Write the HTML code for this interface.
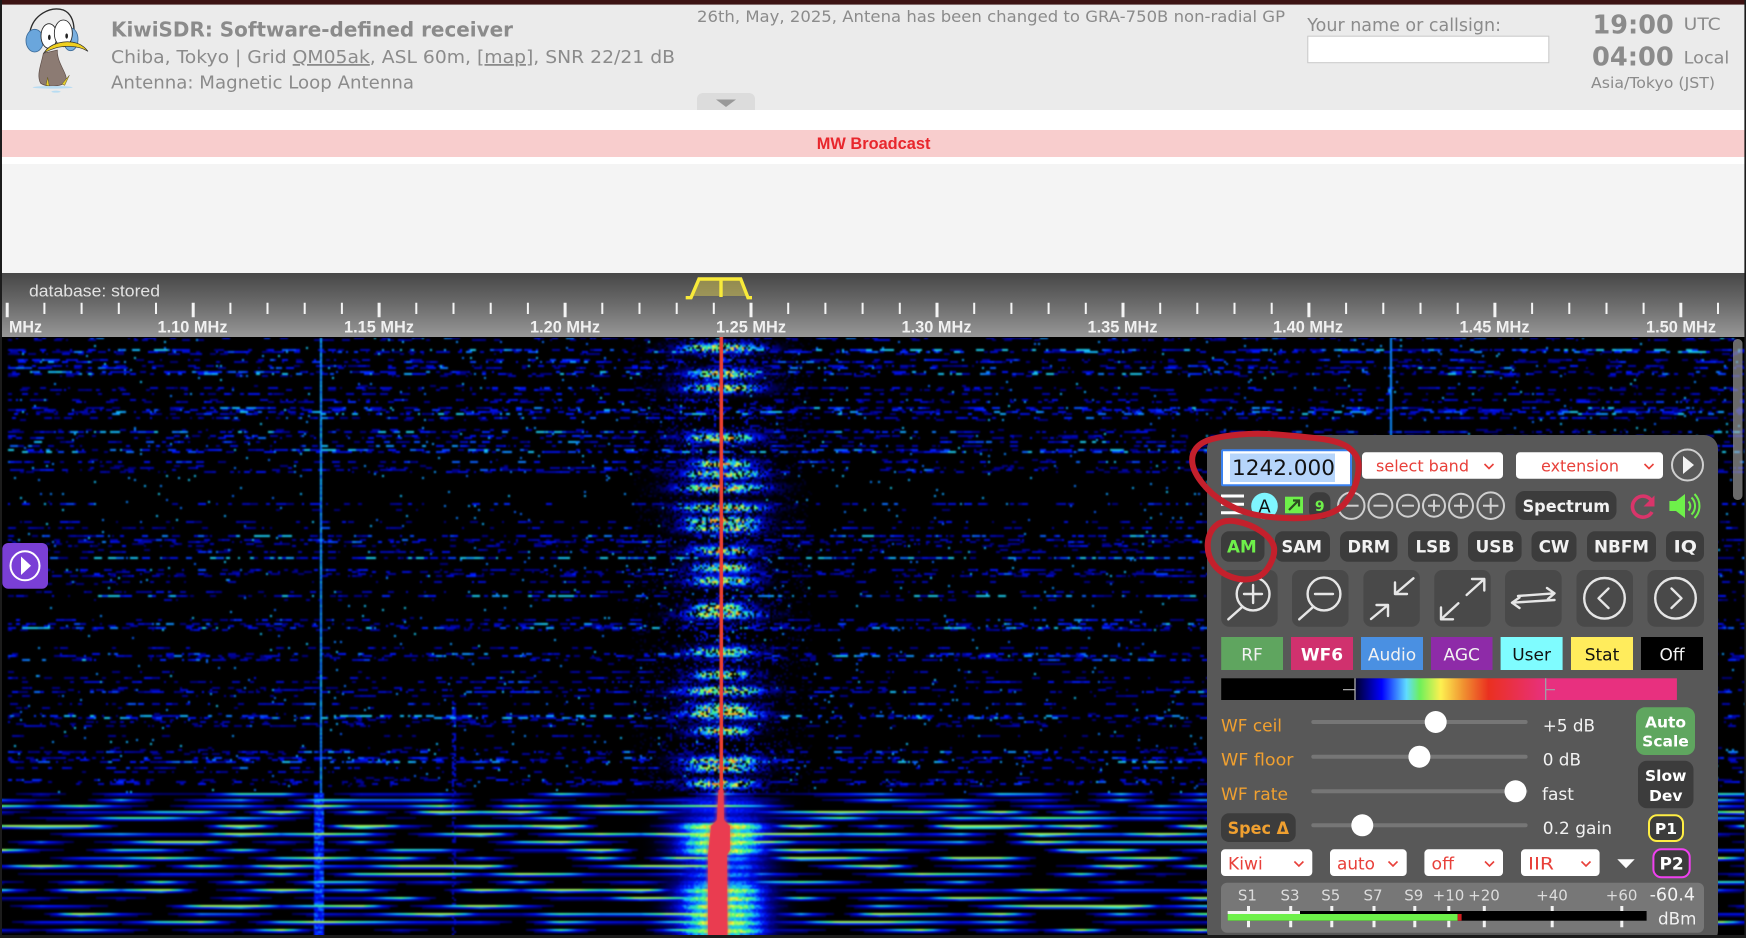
<!DOCTYPE html>
<html><head><meta charset="utf-8"><title>KiwiSDR</title>
<style>
html,body{margin:0;padding:0;background:#000;width:1746px;height:938px;overflow:hidden}
#wf{position:absolute;left:0;top:337px;width:1746px;height:598px;display:block}
#ui{position:absolute;left:0;top:0}
text{font-family:"DejaVu Sans",sans-serif}
.l{font-family:"Liberation Sans",Arial,sans-serif}
.b{font-weight:bold}
.g{fill:#8b8b8b}
.w{fill:#f2f2f2}
.r{fill:#e8403a}
.o{fill:#f0a030}
.ch{fill:none;stroke:#e8403a;stroke-width:1.6}
.ic{fill:none;stroke:#e6e6e6;stroke-width:2.4;stroke-linecap:round;stroke-linejoin:round}
.cc{fill:none;stroke:#cfcfcf;stroke-width:2}
.btn{fill:#3c3c3c}
.ib{fill:#494949}
.tr{fill:#767676}
.th{fill:#fff}
.sc{fill:#f0f0f0;font-size:16.5px;font-weight:bold}
.sm{fill:#dcdcdc;font-size:15px}
</style></head>
<body>
<canvas id="wf" width="1746" height="598"></canvas>
<svg id="ui" width="1746" height="938" viewBox="0 0 1746 938" xmlns="http://www.w3.org/2000/svg">
<defs>
<linearGradient id="sg" x1="0" y1="0" x2="0" y2="1"><stop offset="0" stop-color="#474747"/><stop offset=".5" stop-color="#6c6c6c"/><stop offset="1" stop-color="#979797"/></linearGradient>
<linearGradient id="cb" x1="0" y1="0" x2="1" y2="0">
<stop offset="0" stop-color="#00002a"/><stop offset=".14" stop-color="#0000ff"/><stop offset=".27" stop-color="#5fdcff"/><stop offset=".34" stop-color="#6ef05a"/><stop offset=".45" stop-color="#fdf050"/><stop offset=".57" stop-color="#f09030"/><stop offset=".7" stop-color="#ea3020"/><stop offset="1" stop-color="#e8307f"/></linearGradient>
</defs>
<!-- page areas -->
<rect x="0" y="0" width="1746" height="110" fill="#ebebeb"/>
<rect x="0" y="0" width="1746" height="4.6" fill="#3d1414"/>
<rect x="0" y="110" width="1746" height="20" fill="#fff"/>
<rect x="0" y="130" width="1746" height="27" fill="#f8cdcd"/>
<rect x="0" y="157" width="1746" height="7" fill="#fff"/>
<rect x="0" y="164" width="1746" height="109" fill="#f4f4f4"/>
<rect x="0" y="273" width="1746" height="64" fill="url(#sg)"/>
<rect x="0" y="0" width="2" height="938" fill="#1c1c1c"/>
<rect x="1744.4" y="0" width="1.6" height="938" fill="#1c1c1c"/>

<!-- kiwi logo -->
<g transform="scale(.3333)">
<path d="M90 95C100 45 150 18 190 30C210 38 222 60 222 90" fill="none" stroke="#2b2b2b" stroke-width="4"/>
<ellipse cx="104" cy="122" rx="26" ry="34" fill="#6aa6dc" stroke="#3a6a98" stroke-width="2.5"/>
<ellipse cx="212" cy="118" rx="22" ry="34" fill="#7ab0e0" stroke="#3a6a98" stroke-width="2.5"/>
<path d="M130 160C125 190 108 225 122 250C140 262 185 262 198 244C205 222 170 190 172 150Z" fill="#8c7b73" stroke="#5a4a44" stroke-width="2"/>
<ellipse cx="147" cy="108" rx="24" ry="37" fill="#fff" stroke="#222" stroke-width="2.5"/>
<ellipse cx="190" cy="100" rx="27" ry="40" fill="#fff" stroke="#222" stroke-width="2.5"/>
<ellipse cx="148" cy="112" rx="4" ry="8" fill="#222"/><ellipse cx="200" cy="108" rx="4" ry="8" fill="#222"/>
<path d="M132 158C150 130 195 118 232 130C248 136 258 146 264 154C240 138 190 132 150 150Z" fill="#f0d020" stroke="#2b2b2b" stroke-width="2"/>
<path d="M143 232L148 258L138 256ZM208 226L194 256L186 252Z" fill="#e8d030" stroke="#5a5020" stroke-width="1.5"/>
<ellipse cx="158" cy="262" rx="60" ry="4" fill="#b8dcf2"/><ellipse cx="168" cy="275" rx="14" ry="3" fill="#b8dcf2"/>
</g>

<!-- header text -->
<text x="111" y="36.5" class="b g" font-size="20" textLength="402" lengthAdjust="spacingAndGlyphs">KiwiSDR: Software-defined receiver</text>
<text x="111" y="63" class="g" font-size="18" textLength="564" lengthAdjust="spacingAndGlyphs">Chiba, Tokyo | Grid <tspan text-decoration="underline">QM05ak</tspan>, ASL 60m, <tspan text-decoration="underline">[map]</tspan>, SNR 22/21 dB</text>
<text x="111" y="88.5" class="g" font-size="18" textLength="303" lengthAdjust="spacingAndGlyphs">Antenna: Magnetic Loop Antenna</text>
<text x="697" y="22" class="g" font-size="16" textLength="588" lengthAdjust="spacingAndGlyphs">26th, May, 2025, Antena has been changed to GRA-750B non-radial GP</text>
<path d="M697 110V99a6 6 0 0 1 6-6h46a6 6 0 0 1 6 6v11Z" fill="#dcdcdc"/>
<path d="M716 99.5h20l-10 7.5Z" fill="#999"/>
<text x="1307.3" y="31" class="g" font-size="18" textLength="193.7" lengthAdjust="spacingAndGlyphs">Your name or callsign:</text>
<rect x="1307.8" y="36.2" width="241" height="26.5" fill="#fff" stroke="#c8c8c8"/>
<text x="1592.5" y="33.3" class="b g" font-size="26" textLength="81.2" lengthAdjust="spacingAndGlyphs">19:00</text>
<text x="1683.7" y="30" class="g" font-size="17" textLength="37" lengthAdjust="spacingAndGlyphs">UTC</text>
<text x="1592" y="65.7" class="b g" font-size="26" textLength="81.7" lengthAdjust="spacingAndGlyphs">04:00</text>
<text x="1683.7" y="63.3" class="g" font-size="17" textLength="45.6" lengthAdjust="spacingAndGlyphs">Local</text>
<text x="1591" y="88" class="g" font-size="15" textLength="124" lengthAdjust="spacingAndGlyphs">Asia/Tokyo (JST)</text>
<text x="816.8" y="149" class="l b" font-size="16.5" fill="#e8262c" textLength="113.6" lengthAdjust="spacingAndGlyphs">MW Broadcast</text>

<!-- scale -->
<text x="29" y="296.7" class="l" font-size="17" fill="#e2e2e2" textLength="131" lengthAdjust="spacingAndGlyphs">database: stored</text>
<path id="ticksMinor" fill="none" stroke="#f4f4f4" stroke-width="2"/>
<path id="ticksMajor" fill="none" stroke="#f4f4f4" stroke-width="3"/>
<g class="l" text-anchor="middle">
<text x="25.5" y="332.7" class="l sc" textLength="33" lengthAdjust="spacingAndGlyphs">MHz</text>
<text x="192.5" y="332.7" class="l sc" textLength="70" lengthAdjust="spacingAndGlyphs">1.10 MHz</text>
<text x="379" y="332.7" class="l sc" textLength="70" lengthAdjust="spacingAndGlyphs">1.15 MHz</text>
<text x="565" y="332.7" class="l sc" textLength="70" lengthAdjust="spacingAndGlyphs">1.20 MHz</text>
<text x="751" y="332.7" class="l sc" textLength="70" lengthAdjust="spacingAndGlyphs">1.25 MHz</text>
<text x="936.5" y="332.7" class="l sc" textLength="70" lengthAdjust="spacingAndGlyphs">1.30 MHz</text>
<text x="1122.5" y="332.7" class="l sc" textLength="70" lengthAdjust="spacingAndGlyphs">1.35 MHz</text>
<text x="1308" y="332.7" class="l sc" textLength="70" lengthAdjust="spacingAndGlyphs">1.40 MHz</text>
<text x="1494.5" y="332.7" class="l sc" textLength="70" lengthAdjust="spacingAndGlyphs">1.45 MHz</text>
<text x="1681" y="332.7" class="l sc" textLength="70" lengthAdjust="spacingAndGlyphs">1.50 MHz</text>
</g>
<!-- passband -->
<path d="M699 279H740.7L746.7 296H693Z" fill="#d8c850" fill-opacity=".5"/>
<path d="M685.7 297.7H691L699 279H740.7L748 297.7H752M721 279V297" fill="none" stroke="#f8ea3a" stroke-width="3.4"/>

<!-- left purple button -->
<rect x="2.3" y="543" width="45.7" height="45.7" rx="6" fill="#7a3fd6"/>
<circle cx="25" cy="565.8" r="14.5" fill="none" stroke="#fff" stroke-width="2"/>
<path d="M21 556.5L31 565.8L21 575Z" fill="#fff"/>

<!-- scrollbar -->
<rect x="1733" y="339" width="9.5" height="161" rx="4.5" fill="#b0b0b0" fill-opacity=".6"/>

<!-- control panel -->
<rect x="1207" y="435" width="511" height="510" rx="14" fill="#585858"/>
<!-- freq input -->
<rect x="1222" y="450.3" width="129" height="35" rx="1" fill="#fff" stroke="#3b82f0" stroke-width="2"/>
<rect x="1230" y="453.5" width="105" height="28.5" fill="#b6d5fb"/>
<text x="1232" y="475" font-size="21.6" fill="#111" textLength="103" lengthAdjust="spacingAndGlyphs">1242.000</text>
<!-- selects -->
<rect x="1362" y="452.3" width="141" height="26.4" rx="4" fill="#fff"/>
<text x="1376" y="471.7" class="r" font-size="16" textLength="93" lengthAdjust="spacingAndGlyphs">select band</text>
<path class="ch" d="M1484.5 464l4.5 4.5 4.5-4.5"/>
<rect x="1516" y="452.3" width="147" height="26.4" rx="4" fill="#fff"/>
<text x="1541" y="471.7" class="r" font-size="16" textLength="78" lengthAdjust="spacingAndGlyphs">extension</text>
<path class="ch" d="M1644.5 464l4.5 4.5 4.5-4.5"/>
<circle cx="1687.5" cy="465" r="15.5" class="cc" stroke-width="2.2"/>
<path d="M1683 456L1694 465L1683 474Z" fill="#f2f2f2"/>
<!-- row 2 -->
<path d="M1221 496H1244M1221 504.3H1244M1221 512.7H1244" stroke="#fff" stroke-width="3"/>
<circle cx="1264.5" cy="506" r="13.3" fill="#7ff6ff"/>
<text x="1264.5" y="512.5" font-size="18" text-anchor="middle" fill="#111">A</text>
<rect x="1285" y="496.7" width="18" height="16.6" fill="#6ef04a"/>
<path d="M1289 510L1298 501M1293 500.5H1299V506.5" fill="none" stroke="#2d4a20" stroke-width="2.2"/>
<rect x="1309" y="492.3" width="21.4" height="26.7" rx="8" class="btn"/>
<text x="1319.7" y="511" class="b" font-size="14" text-anchor="middle" fill="#6ef04a">9</text>
<g class="cc">
<circle cx="1351.3" cy="505.7" r="13.2"/><path d="M1344 505.7H1358.6"/>
<circle cx="1380.4" cy="505.7" r="12"/><path d="M1373.5 505.7H1387.3"/>
<circle cx="1408" cy="505.7" r="11"/><path d="M1402 505.7H1414"/>
<circle cx="1434" cy="505.7" r="11"/><path d="M1428 505.7H1440M1434 499.7V511.7"/>
<circle cx="1461" cy="505.7" r="12"/><path d="M1454 505.7H1468M1461 498.7V512.7"/>
<circle cx="1490.7" cy="505.7" r="13.3"/><path d="M1483 505.7H1498.4M1490.7 498V513.4"/>
</g>
<rect x="1515.5" y="491" width="101" height="29" rx="9" class="btn"/>
<text x="1522.6" y="512" class="b w" font-size="16.5" textLength="87.4" lengthAdjust="spacingAndGlyphs">Spectrum</text>
<path d="M1651.5 500.5A10.5 10.5 0 1 0 1652 512" fill="none" stroke="#d9356a" stroke-width="3.6"/>
<path d="M1654.5 495.5V506.5H1643.5Z" fill="#d9356a"/>
<path d="M1669.4 501H1676L1685 494V518L1676 511H1669.4Z" fill="#6ef04a"/>
<path d="M1688.5 501.5A6.5 6.5 0 0 1 1688.5 510.5M1691.5 497.5A12 12 0 0 1 1691.5 514.5M1694.5 494A17 17 0 0 1 1694.5 518" fill="none" stroke="#6ef04a" stroke-width="2"/>

<!-- mode buttons -->
<g class="btn">
<rect x="1221" y="531.3" width="43.5" height="30.4" rx="8"/>
<rect x="1275" y="531.3" width="55" height="30.4" rx="8"/>
<rect x="1340" y="531.3" width="57.4" height="30.4" rx="8"/>
<rect x="1408" y="531.3" width="49.7" height="30.4" rx="8"/>
<rect x="1468" y="531.3" width="53.6" height="30.4" rx="8"/>
<rect x="1531.5" y="531.3" width="45" height="30.4" rx="8"/>
<rect x="1587" y="531.3" width="69" height="30.4" rx="8"/>
<rect x="1666" y="531.3" width="38" height="30.4" rx="8"/>
</g>
<g class="b" font-size="17">
<text x="1227" y="552.7" fill="#6ef04a" textLength="29.7" lengthAdjust="spacingAndGlyphs">AM</text>
<text x="1281.5" y="552.7" class="w" textLength="40.5" lengthAdjust="spacingAndGlyphs">SAM</text>
<text x="1347.5" y="552.7" class="w" textLength="42.5" lengthAdjust="spacingAndGlyphs">DRM</text>
<text x="1415.5" y="552.7" class="w" textLength="35.5" lengthAdjust="spacingAndGlyphs">LSB</text>
<text x="1475.5" y="552.7" class="w" textLength="39" lengthAdjust="spacingAndGlyphs">USB</text>
<text x="1538.6" y="552.7" class="w" textLength="30.8" lengthAdjust="spacingAndGlyphs">CW</text>
<text x="1594" y="552.7" class="w" textLength="55" lengthAdjust="spacingAndGlyphs">NBFM</text>
<text x="1673.7" y="552.7" class="w" textLength="23.3" lengthAdjust="spacingAndGlyphs">IQ</text>
</g>

<!-- icon buttons -->
<g class="ib">
<rect x="1221.2" y="570" width="56.4" height="56.7" rx="8"/>
<rect x="1292" y="570" width="56.5" height="56.7" rx="8"/>
<rect x="1363.4" y="570" width="56.4" height="56.7" rx="8"/>
<rect x="1434.3" y="570" width="56.4" height="56.7" rx="8"/>
<rect x="1505" y="570" width="56.6" height="56.7" rx="8"/>
<rect x="1576.5" y="570" width="56.5" height="56.7" rx="8"/>
<rect x="1647.4" y="570" width="56.6" height="56.7" rx="8"/>
</g>
<g class="ic">
<circle cx="1253.1" cy="594" r="16.4"/><path d="M1242.5 606.7L1228.3 619.3M1244 594H1262M1253.1 585V603"/>
<circle cx="1324" cy="594" r="16.4"/><path d="M1313.4 606.7L1299.2 619.3M1315 594H1333"/>
<path d="M1413.4 578.3L1395 594M1395 582.5V594H1407"/><path d="M1371 619L1388 605M1376.5 605H1388V616"/>
<path d="M1466.6 595L1484.3 579M1472 579H1484.3V590.5"/><path d="M1458.4 603.3L1441 619.3M1441 607.5V619.3H1453"/>
<path d="M1518 596L1554.5 593.3M1547 588L1554.5 593.3L1548 599"/><path d="M1554.5 600L1512 602.7M1519.5 597.5L1512 602.7L1519.5 608"/>
<circle cx="1604.5" cy="598.3" r="20.3"/><path d="M1608.5 588.5L1598.5 598.3L1608.5 608"/>
<circle cx="1675.5" cy="598.3" r="20.3"/><path d="M1671.5 588.5L1681.5 598.3L1671.5 608"/>
</g>

<!-- red hand-drawn ovals (over the controls) -->
<path id="ov1" fill="none" stroke="#c4202c" stroke-width="6" stroke-linecap="round"/>
<path id="ov2" fill="none" stroke="#c4202c" stroke-width="6" stroke-linecap="round"/>

<!-- tabs -->
<rect x="1221.2" y="637" width="61.8" height="33" fill="#5fa55f"/>
<rect x="1291" y="637" width="62" height="33" fill="#d0316e"/>
<rect x="1361" y="637" width="62" height="33" fill="#4a90e2"/>
<rect x="1431" y="637" width="61.5" height="33" fill="#8e2ba8"/>
<rect x="1500.6" y="637" width="62" height="33" fill="#7ffcff"/>
<rect x="1571" y="637" width="62" height="33" fill="#ffec5c"/>
<rect x="1641" y="637" width="62" height="33" fill="#000"/>
<g font-size="17" text-anchor="middle">
<text x="1252" y="660.7" class="w">RF</text>
<text x="1322" y="660.7" class="b" fill="#fff">WF6</text>
<text x="1392" y="660.7" class="w">Audio</text>
<text x="1461.7" y="660.7" class="w">AGC</text>
<text x="1531.6" y="660.7" fill="#111">User</text>
<text x="1602" y="660.7" fill="#111">Stat</text>
<text x="1672" y="660.7" class="w">Off</text>
</g>

<!-- colour bar -->
<rect x="1221.2" y="678.3" width="133.8" height="21.7" fill="#000"/>
<rect x="1355" y="678.3" width="190.7" height="21.7" fill="url(#cb)"/>
<rect x="1545.7" y="678.3" width="131.2" height="21.7" fill="#e8307f"/>
<path d="M1343 689.7H1355M1355 678.3V700" stroke="#bbb" stroke-width="1.2" fill="none"/>
<path d="M1545.7 689.7H1555M1545.7 678.3V700" stroke="#9aa" stroke-width="1.2" fill="none"/>

<!-- sliders -->
<text x="1221" y="731.7" class="o" font-size="17" textLength="61" lengthAdjust="spacingAndGlyphs">WF ceil</text>
<text x="1221" y="765.7" class="o" font-size="17" textLength="72.5" lengthAdjust="spacingAndGlyphs">WF floor</text>
<text x="1221" y="800" class="o" font-size="17" textLength="67" lengthAdjust="spacingAndGlyphs">WF rate</text>
<rect x="1311.3" y="720" width="216.3" height="4" rx="2" class="tr"/>
<rect x="1311.3" y="754.7" width="216.3" height="4" rx="2" class="tr"/>
<rect x="1311.3" y="789.3" width="216.3" height="4" rx="2" class="tr"/>
<rect x="1311.3" y="823.3" width="216.3" height="4" rx="2" class="tr"/>
<circle cx="1435.7" cy="722" r="11" class="th"/>
<circle cx="1419.4" cy="756.7" r="11" class="th"/>
<circle cx="1515.5" cy="791.3" r="11" class="th"/>
<circle cx="1362.3" cy="825.3" r="11" class="th"/>
<rect x="1221" y="813.3" width="74.7" height="28.7" rx="8" class="btn"/>
<text x="1227.6" y="834" class="b o" font-size="16.5" textLength="61.4" lengthAdjust="spacingAndGlyphs">Spec Δ</text>
<g class="w" font-size="17">
<text x="1542.8" y="731.7" textLength="52.2" lengthAdjust="spacingAndGlyphs">+5 dB</text>
<text x="1542.8" y="765.7" textLength="38.2" lengthAdjust="spacingAndGlyphs">0 dB</text>
<text x="1542" y="800" textLength="32" lengthAdjust="spacingAndGlyphs">fast</text>
<text x="1542.8" y="834" textLength="69.2" lengthAdjust="spacingAndGlyphs">0.2 gain</text>
</g>
<rect x="1636" y="707.3" width="59" height="47.7" rx="9" fill="#5fa65f"/>
<g class="b" font-size="15.5" text-anchor="middle" fill="#fff">
<text x="1665.5" y="727.3">Auto</text><text x="1665.5" y="746.7">Scale</text>
</g>
<rect x="1638" y="760.7" width="55.5" height="47.6" rx="9" class="btn"/>
<g class="b" font-size="15.5" text-anchor="middle" fill="#fff">
<text x="1665.7" y="781">Slow</text><text x="1665.7" y="801">Dev</text>
</g>
<rect x="1649" y="815.3" width="34" height="25.7" rx="8" fill="#3c3c3c" stroke="#ffee44" stroke-width="2"/>
<text x="1666" y="834" class="b" font-size="15.5" text-anchor="middle" fill="#fff">P1</text>
<rect x="1653.4" y="849.3" width="36.3" height="28" rx="8" fill="#3c3c3c" stroke="#f040f0" stroke-width="2"/>
<text x="1671.6" y="869.5" class="b" font-size="17" text-anchor="middle" fill="#fff">P2</text>

<!-- bottom selects -->
<rect x="1221" y="849.3" width="91.3" height="26.7" rx="4" fill="#fff"/>
<rect x="1330" y="849.3" width="76.7" height="26.7" rx="4" fill="#fff"/>
<rect x="1424.4" y="849.3" width="78.6" height="26.7" rx="4" fill="#fff"/>
<rect x="1521" y="849.3" width="78.6" height="26.7" rx="4" fill="#fff"/>
<g class="r" font-size="17">
<text x="1228" y="869.3" textLength="34.7" lengthAdjust="spacingAndGlyphs">Kiwi</text>
<text x="1337" y="869.3" textLength="38" lengthAdjust="spacingAndGlyphs">auto</text>
<text x="1431.5" y="869.3" textLength="22.5" lengthAdjust="spacingAndGlyphs">off</text>
<text x="1528" y="869.3" textLength="26" lengthAdjust="spacingAndGlyphs">IIR</text>
</g>
<g class="ch">
<path d="M1294.4 861.5l4.5 4.5 4.5-4.5"/><path d="M1388.5 861.5l4.5 4.5 4.5-4.5"/>
<path d="M1485 861.5l4.5 4.5 4.5-4.5"/><path d="M1581.5 861.5l4.5 4.5 4.5-4.5"/>
</g>
<path d="M1617.3 859.3H1634.7L1626 868.3Z" fill="#fff"/>

<!-- S-meter -->
<rect x="1221" y="882.7" width="483" height="50" rx="6" fill="#777"/>
<g class="sm" text-anchor="middle">
<text x="1247.4" y="900.7">S1</text><text x="1290" y="900.7">S3</text><text x="1330.8" y="900.7">S5</text>
<text x="1373" y="900.7">S7</text><text x="1413.8" y="900.7">S9</text><text x="1448.5" y="900.7">+10</text>
<text x="1484" y="900.7">+20</text><text x="1552" y="900.7">+40</text><text x="1621.6" y="900.7">+60</text>
</g>
<path d="M1248.5 906V927.3M1290.7 906V927.3M1331.8 906V927.3M1374 906V927.3M1414.8 906V927.3M1448.8 906V927.3M1484.3 906V927.3M1552.2 906V927.3M1621.8 906V927.3" stroke="#f4f4f4" stroke-width="3"/>
<rect x="1227.6" y="911" width="419" height="9.7" fill="#000"/>
<rect x="1227.6" y="911" width="72.4" height="3" fill="#f4f4f4"/>
<rect x="1227.6" y="914" width="230.1" height="6.7" fill="#6ef04a"/>
<rect x="1457.7" y="914" width="3.9" height="6.7" fill="#d02020"/>
<text x="1649.6" y="900.7" class="w" font-size="18" textLength="45.4" lengthAdjust="spacingAndGlyphs">-60.4</text>
<text x="1658" y="924.3" class="w" font-size="17" textLength="38.4" lengthAdjust="spacingAndGlyphs">dBm</text>
<rect x="0" y="935" width="1746" height="3" fill="#1c1c1c"/>
</svg>
<script>
(function(){
// scale ticks
var maj='',min='',x0=7.2,st=185.96/5;
for(var i=0;i<47;i++){var x=x0+i*st;if(i%5==0)maj+='M'+x.toFixed(1)+' 302.7V317.3';else min+='M'+x.toFixed(1)+' 302.7V314';}
document.getElementById('ticksMajor').setAttribute('d',maj);
document.getElementById('ticksMinor').setAttribute('d',min);
// smooth hand-drawn ovals
function smooth(p,closed){var m=function(a,b){return ((a[0]+b[0])/2)+' '+((a[1]+b[1])/2)};
 var d='M'+m(p[0],p[1]);for(var i=1;i<p.length-1;i++){d+='Q'+p[i][0]+' '+p[i][1]+' '+m(p[i],p[i+1]);}
 if(closed)d+='Q'+p[p.length-1][0]+' '+p[p.length-1][1]+' '+m(p[p.length-1],p[0])+'Q'+p[0][0]+' '+p[0][1]+' '+m(p[0],p[1]);return d;}
document.getElementById('ov1').setAttribute('d',smooth([[1223,436],[1257,433],[1297,436],[1340,441],[1358,455],[1359,473],[1353,493],[1338,512],[1307,519],[1263,517],[1237,510],[1212,495],[1194,473],[1191,455],[1201,442]],true));
document.getElementById('ov2').setAttribute('d',smooth([[1223.7,519],[1250,524],[1271,538],[1276,553],[1264,576],[1243,581],[1220,573],[1207,555],[1208.5,532]],true));
// waterfall
var s=12345;function R(){s^=s<<13;s^=s>>>17;s^=s<<5;return (s>>>0)/4294967296;}
var W=873,H=299,off=document.createElement('canvas');off.width=W;off.height=H;
var g=off.getContext('2d'),im=g.createImageData(W,H),d=im.data;
var st2=[[0,0,0,0],[.18,0,0,130],[.34,0,20,255],[.48,20,190,255],[.6,70,255,130],[.72,250,250,60],[.84,255,130,30],[1,240,50,70]];
function cm(v){if(!(v>0))return [0,0,0];if(v>=1)v=1;for(var i=1;i<st2.length;i++){if(v<=st2[i][0]){var a=st2[i-1],b=st2[i],t=(v-a[0])/(b[0]-a[0]);return [a[1]+(b[1]-a[1])*t,a[2]+(b[2]-a[2])*t,a[3]+(b[3]-a[3])*t];}}return [240,50,70];}
var blobs=[347,373,387,437,463,473,487,507,520,527,550,567,580,607,613,651,674,690,707,713,730,760,767,783];
var widths=[];for(var i=0;i<blobs.length;i++)widths.push(32+18*R());
var knotsN=Math.ceil(W/20)+2;
var band=[];for(var i=0;i<H/3+3;i++){var r0=R();band.push(r0<.3?.2:.5+.55*R());}
var q=0,lastKnots=null,rowA=0,lastQ=-1;
for(var j=0;j<H;j++){
 var y=337+2*j,kn=[],i;
 var top=y<792;
 var a;
 if(top){ a=R()<.45?0:(.3+.55*R()); var bi=j/3,bf=Math.floor(bi); a*=band[bf]+(band[bf+1]-band[bf])*(bi-bf);
   for(i=0;i<knotsN;i++)kn.push(.4+.55*R());
 } else {
   var per=y<822?3:4; q=Math.floor(j/per);
   if(q!=lastQ){lastQ=q;rowA=(y<822?.34:.42)+.32*R();lastKnots=[];for(i=0;i<knotsN;i++){var r=R();lastKnots.push(r<.3?0:r*r*1.0+.12);}}
   kn=lastKnots;
   var ph=j%per; a=rowA*(per==3?[1,.5,0][ph]:[1,.5,.08,0][ph]);
 }
 var run=0,val=0;
 for(var x=0;x<W;x++){
  var xp=x*2,dx=xp-721,v=0,ki=x/20,kf=Math.floor(ki),kv=kn[kf]+(kn[kf+1]-kn[kf])*(ki-kf);
  if(top){
    if(run<=0){run=1+Math.floor(R()*4);val=R();}run--;
    v=a*kv*Math.pow(val,1.8)*1.2;
    if(R()<.006)v=Math.max(v,.4+.1*R());
    if(v<.16)v=0;
    if(v>.5)v=.5;
    if(xp<8)v=0;
    var adx=Math.abs(dx),B=0,wd=40;
    for(var b=0;b<blobs.length;b++){var t=(y-blobs[b])/5.5;if(t>-3&&t<3){var e=Math.exp(-t*t);if(e>B){B=e;wd=widths[b];}}}
    if(adx<90){var tree=B*Math.exp(-Math.pow(adx/wd,3))*(.44+.48*R());if(R()<.72)v=Math.max(v,tree);
      if(R()<.12)v=Math.max(v,.32*Math.exp(-Math.pow(adx/62,2)));}
    if(Math.abs(xp-320)<2)v=Math.max(v,.4+.08*R());
    if(Math.abs(xp-1390)<2&&y<465)v=Math.max(v,.44);
    if(Math.abs(xp-453)<2&&y>700&&R()<.5)v=Math.max(v,.28);
  } else {
    v=a*(.05+kv*1.3);if(v>.66)v=.66;if(v<.1)v=0;
    var adx=Math.abs(dx),h=0;
    if(y>=823&&y<855)h=.84-(y-823)*.003;
    else if(y>=885)h=.72+.08*R();
    else if(y>=855)h=.48;
    else if(y>=797)h=.38;
    if(adx<110){var tp=Math.exp(-Math.pow(adx/47,3));v=Math.max(v,h*tp*(.6+.4*(j%4<2?1:.4))*(.8+.2*R()));}
    if(xp>=314&&xp<=322)v=Math.max(v,(.3+.14*R())*(j%3==2?.7:1));
    if(Math.abs(xp-453)<3&&R()<.45)v=Math.max(v,.24);
  }
  var c=cm(v),o=(j*W+x)*4;d[o]=c[0];d[o+1]=c[1];d[o+2]=c[2];d[o+3]=255;
 }
}
g.putImageData(im,0,0);
var cv=document.getElementById('wf'),ctx=cv.getContext('2d');
ctx.imageSmoothingEnabled=true;ctx.drawImage(off,0,0,1746,598);
ctx.fillStyle='#000';ctx.fillRect(0,0,1746,1);
// carrier
function Y(v){return v-337}
ctx.fillStyle='#ee4030';ctx.fillRect(719.5,0,3.6,Y(792));
ctx.save();ctx.shadowColor='#ff5040';ctx.shadowBlur=4;
ctx.fillStyle='#ea3c50';
ctx.beginPath();ctx.moveTo(718.5,Y(790));ctx.lineTo(723.5,Y(790));ctx.lineTo(724,Y(820));ctx.lineTo(730,Y(826));ctx.lineTo(730,Y(850));ctx.lineTo(727,Y(855));ctx.lineTo(727.5,Y(935));ctx.lineTo(708,Y(935));ctx.lineTo(708,Y(855));ctx.lineTo(711,Y(826));ctx.lineTo(717,Y(820));ctx.closePath();ctx.fill();
ctx.restore();
})();
</script>
</body></html>
